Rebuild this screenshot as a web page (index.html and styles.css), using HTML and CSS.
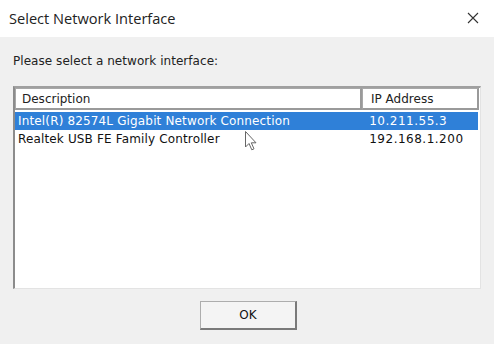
FILE: index.html
```html
<!DOCTYPE html>
<html>
<head>
  <meta charset="utf-8">
  <title>Select Network Interface</title>
  <link rel="stylesheet" href="styles.css">
</head>
<body>
  <div class="dialog">
    <div class="titlebar">
      <span class="title">Select Network Interface</span>
      <svg class="close" width="12" height="12" viewBox="0 0 12 12">
        <path d="M1 1 L11 11 M11 1 L1 11" stroke="#333" stroke-width="1.1" fill="none"/>
      </svg>
    </div>
    <div class="content">
      <div class="prompt">Please select a network interface:</div>
      <div class="listbox">
        <div class="list_head">
          <div class="col_desc head_cell">Description</div>
          <div class="col_ip head_cell">IP Address</div>
        </div>
        <div class="row selected">
          <div class="col_desc">Intel(R) 82574L Gigabit Network Connection</div>
          <div class="col_ip">10.211.55.3</div>
        </div>
        <div class="row">
          <div class="col_desc">Realtek USB FE Family Controller</div>
          <div class="col_ip">192.168.1.200</div>
        </div>
        <svg class="cursor" width="14" height="22" viewBox="0 0 14 22">
          <path d="M1.5 1.5 L1.5 17 L5 13.5 L7.8 19.8 L10 18.8 L7.3 12.8 L12 12.8 Z" fill="#fff" stroke="#666" stroke-width="1"/>
        </svg>
      </div>
      <div class="buttons">
        <div class="button">OK</div>
      </div>
    </div>
  </div>
</body>
</html>
```

FILE: styles.css
```css
body {
  margin: 0;
  background: #f0f0f0;
  font-family: "DejaVu Sans", Verdana, sans-serif;
  color: #111;
}
.dialog {
  width: 494px;
  height: 344px;
  display: flex;
  flex-direction: column;
}
.titlebar {
  height: 37px;
  background: #fff;
  display: flex;
  align-items: center;
  justify-content: space-between;
  padding: 0 15px 2px 9px;
  box-sizing: border-box;
}
.title {
  font-family: "Open Sans", "Noto Sans", sans-serif;
  font-size: 14.6px;
  color: #222;
}
.content {
  flex: 1;
  padding: 17px 13px 0 13px;
}
.prompt {
  font-size: 12px;
  color: #222;
  letter-spacing: 0.05px;
  height: 32px;
}
.listbox {
  position: relative;
  width: 468px;
  height: 203px;
  box-sizing: border-box;
  background: #fff;
  border-top: 2px solid #a0a0a0;
  border-left: 2px solid #8c8c8c;
  border-right: 1px solid #e3e3e3;
  border-bottom: 1px solid #e3e3e3;
  font-size: 12px;
}
.list_head {
  display: flex;
  height: 22px;
  margin-bottom: 2px;
}
.head_cell {
  background: #fff;
  border: 1px solid #a8a8a8;
  border-right: 2px solid #9a9a9a;
  border-bottom: 2px solid #9a9a9a;
  box-sizing: border-box;
  display: flex;
  align-items: center;
  color: #222;
}
.col_desc {
  width: 347px;
  padding-left: 6px;
  box-sizing: border-box;
  white-space: nowrap;
}
.col_ip {
  width: 117px;
  padding-left: 8px;
  box-sizing: border-box;
  white-space: nowrap;
}
.row {
  display: flex;
  height: 18px;
  align-items: center;
  width: 463px;
}
.row .col_desc {
  padding-left: 3px;
  letter-spacing: 0.15px;
}
.row .col_ip {
  padding-left: 8px;
  letter-spacing: 0.5px;
}
.selected {
  background: #2f80d8;
  color: #fff;
}
.cursor {
  position: absolute;
  left: 229px;
  top: 42px;
}
.buttons {
  display: flex;
  justify-content: center;
  padding-top: 12px;
}
.button {
  width: 97px;
  height: 29px;
  box-sizing: border-box;
  background: #f4f4f4;
  border: 1px solid #adadad;
  border-right: 2px solid #7a7a7a;
  border-bottom: 2px solid #7a7a7a;
  display: flex;
  align-items: center;
  justify-content: center;
  font-size: 12px;
  margin-left: 3px;
}
```
